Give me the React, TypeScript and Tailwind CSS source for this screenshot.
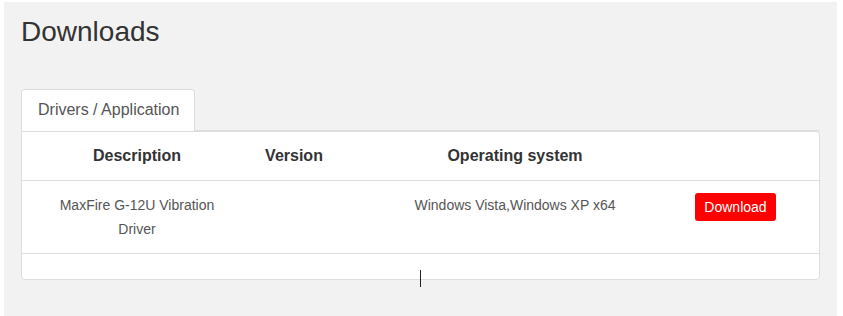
import React from "react";

const rows = [
  {
    description: "MaxFire G-12U Vibration Driver",
    version: "",
    os: "Windows Vista,Windows XP x64",
  },
];

export default function App() {
  return (
    <div className="h-[316px] w-[843px] bg-white pl-1 pr-[6px] pt-[2px] font-['Liberation_Sans',Arial,sans-serif]">
      <div className="relative h-full bg-[#f2f2f2] px-[17px] pt-4">
        <h1 className="text-[28px] leading-7 text-[#333]">Downloads</h1>

        {/* Tabs */}
        <div className="mt-[43px] flex border-b border-[#ddd]">
          <div className="-mb-px h-[42px] w-[174px] rounded-t-[4px] border border-b-0 border-[#ddd] bg-white pl-4 pt-[9px] text-base leading-[22px] text-[#555]">
            Drivers / Application
          </div>
        </div>

        {/* Panel */}
        <div className="rounded-b-[4px] rounded-tr-[4px] border border-[#ddd] bg-white">
          <div className="grid h-[49px] grid-cols-[230px_84px_358px_1fr] items-center border-b border-[#ddd] text-base font-bold text-[#333]">
            <div className="text-center">Description</div>
            <div className="text-center">Version</div>
            <div className="text-center">Operating system</div>
            <div></div>
          </div>
          {rows.map((r) => (
            <div
              key={r.description}
              className="grid grid-cols-[230px_84px_358px_1fr] border-b border-[#ddd] py-3 text-sm leading-6 text-[#555]"
            >
              <div className="px-[30px] text-center">{r.description}</div>
              <div className="text-center">{r.version}</div>
              <div className="text-center">{r.os}</div>
              <div className="pl-px">
                <button className="h-[28px] w-[81px] rounded-[3px] bg-[#ff0000] text-sm text-white">
                  Download
                </button>
              </div>
            </div>
          ))}
          <div className="h-[25px]"></div>
        </div>

        {/* mouse cursor */}
        <div className="absolute left-[416px] top-[268px] h-[17px] w-px bg-[#222]"></div>
      </div>
    </div>
  );
}
